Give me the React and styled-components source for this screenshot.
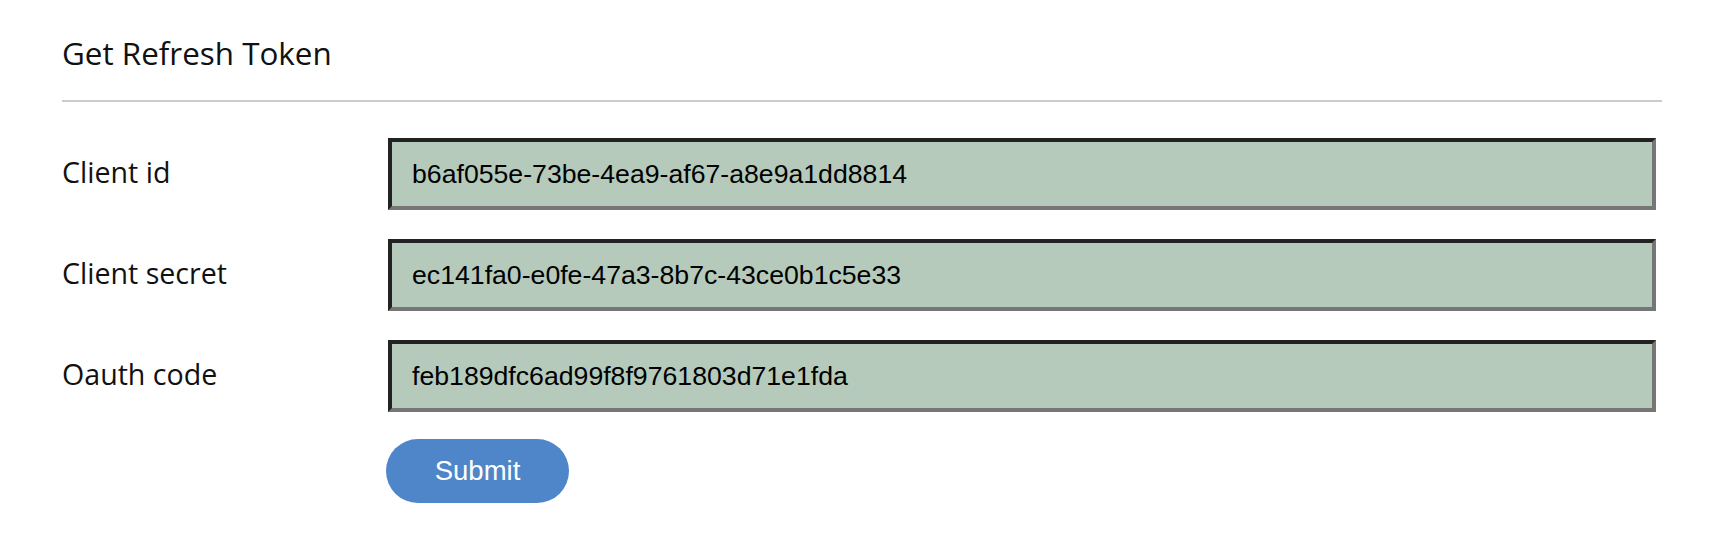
import React from "react";
import styled, { createGlobalStyle } from "styled-components";

const Global = createGlobalStyle`
  html, body { margin: 0; padding: 0; background: #ffffff; }
  body { font-family: "Open Sans", "Noto Sans", sans-serif; color: #111111; }
  * { box-sizing: border-box; }
`;

const Page = styled.div`
  padding: 34px 0 0 62px;
  width: 1662px;
`;

const Title = styled.h2`
  margin: 0 0 28px 0;
  font-family: "Open Sans", "Noto Sans", sans-serif;
  font-weight: 400;
  font-size: 31.4px;
  line-height: 38px;
  color: #111111;
`;

const Rule = styled.hr`
  margin: 0 0 36px 0;
  border: 0;
  height: 2px;
  background: #cccccc;
  width: 1600px;
`;

const Form = styled.form`
  display: grid;
  grid-template-columns: 326px 1268px;
  row-gap: 29px;
  align-items: center;
`;

const Label = styled.label`
  font-family: "Open Sans", "Noto Sans", sans-serif;
  font-size: 28.6px;
  line-height: 38px;
  color: #111111;
  margin-bottom: 4px;
`;

const Input = styled.input`
  height: 72px;
  width: 100%;
  margin: 0;
  padding: 0 20px;
  background: #b5cabb;
  border-style: solid;
  border-width: 4px;
  border-color: #222222 #767676 #767676 #222222;
  font-family: "Liberation Sans", Arial, sans-serif;
  font-size: 26.67px;
  color: #000000;
  outline: none;
`;

const Actions = styled.div`
  grid-column: 2;
  margin-top: -2px;
  margin-left: -2px;
`;

const Button = styled.button`
  height: 64px;
  width: 183px;
  border: 0;
  border-radius: 32px;
  background: #4f86c9;
  color: #ffffff;
  font-family: "Liberation Sans", Arial, sans-serif;
  font-size: 27.5px;
  padding: 0;
  cursor: pointer;
`;

const fields = [
  { id: "client-id", label: "Client id", value: "b6af055e-73be-4ea9-af67-a8e9a1dd8814" },
  { id: "client-secret", label: "Client secret", value: "ec141fa0-e0fe-47a3-8b7c-43ce0b1c5e33" },
  { id: "oauth-code", label: "Oauth code", value: "feb189dfc6ad99f8f9761803d71e1fda" },
];

export default function App() {
  return (
    <>
      <Global />
      <Page>
        <Title>Get Refresh Token</Title>
        <Rule />
        <Form onSubmit={(e) => e.preventDefault()}>
          {fields.map((f) => (
            <React.Fragment key={f.id}>
              <Label htmlFor={f.id}>{f.label}</Label>
              <Input id={f.id} defaultValue={f.value} />
            </React.Fragment>
          ))}
          <Actions>
            <Button type="submit">Submit</Button>
          </Actions>
        </Form>
      </Page>
    </>
  );
}
